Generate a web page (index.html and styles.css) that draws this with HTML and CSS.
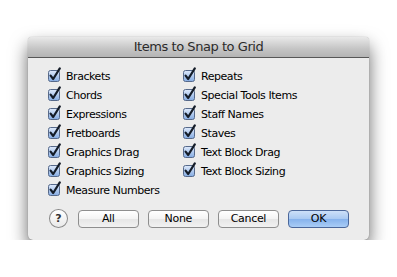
FILE: index.html
```html
<!DOCTYPE html>
<html lang="en">
<head>
    <meta charset="UTF-8">
    <title>Items to Snap to Grid</title>
    <link rel="stylesheet" href="styles.css">
</head>
<body>
    <div class="dialog">
        <div class="titlebar">Items to Snap to Grid</div>

        <div class="content">
            <div class="options">
                <div class="col">
                    <label class="check"><span class="box"></span>Brackets</label>
                    <label class="check"><span class="box"></span>Chords</label>
                    <label class="check"><span class="box"></span>Expressions</label>
                    <label class="check"><span class="box"></span>Fretboards</label>
                    <label class="check"><span class="box"></span>Graphics Drag</label>
                    <label class="check"><span class="box"></span>Graphics Sizing</label>
                    <label class="check"><span class="box"></span>Measure Numbers</label>
                </div>
                <div class="col">
                    <label class="check"><span class="box"></span>Repeats</label>
                    <label class="check"><span class="box"></span>Special Tools Items</label>
                    <label class="check"><span class="box"></span>Staff Names</label>
                    <label class="check"><span class="box"></span>Staves</label>
                    <label class="check"><span class="box"></span>Text Block Drag</label>
                    <label class="check"><span class="box"></span>Text Block Sizing</label>
                </div>
            </div>

            <div class="buttons">
                <button class="help">?</button>
                <button class="btn">All</button>
                <button class="btn">None</button>
                <button class="btn">Cancel</button>
                <button class="btn default">OK</button>
            </div>
        </div>
    </div>

    <svg width="0" height="0" style="position:absolute">
        <defs>
            <linearGradient id="boxfill" x1="0" y1="0" x2="0" y2="1">
                <stop offset="0" stop-color="#dfeafb"/>
                <stop offset="1" stop-color="#84abe2"/>
            </linearGradient>
        </defs>
    </svg>

    <script>
        // checkbox glyph, same for every item
        const box = '<svg width="14" height="15" viewBox="0 0 14 15">' +
            '<rect x="0.5" y="3.5" width="11" height="11" rx="2" fill="url(#boxfill)" stroke="#56698a"/>' +
            '<path d="M2.6 8.6 L5.2 12 L11.8 1.4" fill="none" stroke="#141c28" stroke-width="2.2" stroke-linecap="round" stroke-linejoin="round"/>' +
            '</svg>';
        document.querySelectorAll('.box').forEach(el => el.innerHTML = box);
    </script>
</body>
</html>
```

FILE: styles.css
```css
* {
    margin: 0;
    padding: 0;
    box-sizing: border-box;
}

body {
    background: #fff;
    font-family: 'DejaVu Sans', 'Liberation Sans', sans-serif;
    padding: 37px 0 0 28px;
}

.dialog {
    width: 341px;
    height: 203px;
    background: #ececec;
    border-radius: 4px 4px 5px 5px;
    box-shadow: 0 9px 18px rgba(0, 0, 0, 0.6), 0 0 1px rgba(0, 0, 0, 0.4);
    overflow: hidden;
}

.titlebar {
    height: 21px;
    background: linear-gradient(#e9e9e9, #c4c4c4 60%, #b4b4b4);
    border-bottom: 1px solid #575757;
    text-align: center;
    font-size: 13px;
    letter-spacing: -0.45px;
    line-height: 20px;
    color: #2b2b2b;
}

.content {
    padding: 9px 20px 0 20px;
}

.options {
    display: flex;
}

.col {
    display: flex;
    flex-direction: column;
}

.col:first-child {
    width: 135px;
}

.check {
    display: flex;
    align-items: center;
    height: 19px;
    font-size: 11px;
    letter-spacing: -0.45px;
    color: #000;
}

.box {
    width: 14px;
    height: 15px;
    margin: -4px 4px 0 0;
    display: block;
}

.box svg {
    display: block;
}

.buttons {
    display: flex;
    align-items: center;
    margin-top: 9px;
    gap: 9px;
}

.help {
    width: 19px;
    height: 19px;
    border-radius: 50%;
    border: 1px solid #8a8a8a;
    background: linear-gradient(#ffffff, #e9e9e9);
    font-family: 'DejaVu Sans', sans-serif;
    font-weight: bold;
    font-size: 11px;
    color: #333;
    margin-left: 1px;
    margin-right: 1px;
}

.btn {
    width: 62px;
    height: 18px;
    border-radius: 4px;
    border: 1px solid #8e8e8e;
    background: linear-gradient(#ffffff, #f3f3f3 50%, #e6e6e6 51%, #f2f2f2);
    font-family: 'DejaVu Sans', sans-serif;
    font-size: 11px;
    letter-spacing: -0.3px;
    color: #000;
}

.btn.default {
    border-color: #4b679a;
    background: linear-gradient(#cde0f8, #a9c9f2 50%, #86b2ec 51%, #a9cdf6);
}
```
